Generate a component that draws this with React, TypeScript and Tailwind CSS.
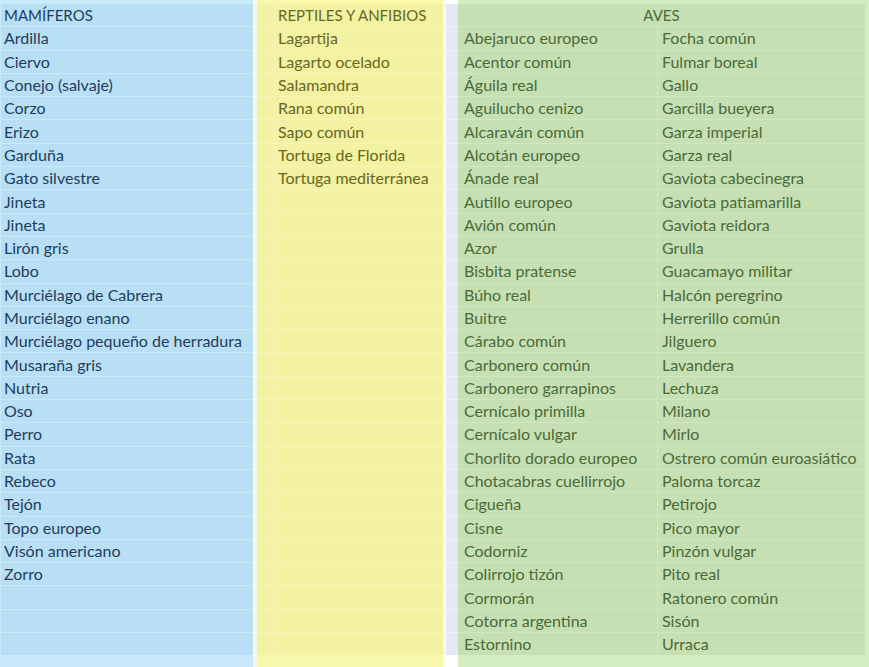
import { Fragment } from "react";

const mamiferos = [
  "Ardilla",
  "Ciervo",
  "Conejo (salvaje)",
  "Corzo",
  "Erizo",
  "Garduña",
  "Gato silvestre",
  "Jineta",
  "Jineta",
  "Lirón gris",
  "Lobo",
  "Murciélago de Cabrera",
  "Murciélago enano",
  "Murciélago pequeño de herradura",
  "Musaraña gris",
  "Nutria",
  "Oso",
  "Perro",
  "Rata",
  "Rebeco",
  "Tejón",
  "Topo europeo",
  "Visón americano",
  "Zorro",
];

const reptiles = [
  "Lagartija",
  "Lagarto ocelado",
  "Salamandra",
  "Rana común",
  "Sapo común",
  "Tortuga de Florida",
  "Tortuga mediterránea",
];

const avesA = [
  "Abejaruco europeo",
  "Acentor común",
  "Águila real",
  "Aguilucho cenizo",
  "Alcaraván común",
  "Alcotán europeo",
  "Ánade real",
  "Autillo europeo",
  "Avión común",
  "Azor",
  "Bisbita pratense",
  "Búho real",
  "Buitre",
  "Cárabo común",
  "Carbonero común",
  "Carbonero garrapinos",
  "Cernícalo primilla",
  "Cernícalo vulgar",
  "Chorlito dorado europeo",
  "Chotacabras cuellirrojo",
  "Cigueña",
  "Cisne",
  "Codorniz",
  "Colirrojo tizón",
  "Cormorán",
  "Cotorra argentina",
  "Estornino",
];

const avesB = [
  "Focha común",
  "Fulmar boreal",
  "Gallo",
  "Garcilla bueyera",
  "Garza imperial",
  "Garza real",
  "Gaviota cabecinegra",
  "Gaviota patiamarilla",
  "Gaviota reidora",
  "Grulla",
  "Guacamayo militar",
  "Halcón peregrino",
  "Herrerillo común",
  "Jilguero",
  "Lavandera",
  "Lechuza",
  "Milano",
  "Mirlo",
  "Ostrero común euroasiático",
  "Paloma torcaz",
  "Petirojo",
  "Pico mayor",
  "Pinzón vulgar",
  "Pito real",
  "Ratonero común",
  "Sisón",
  "Urraca",
];

const ROWS = 27;
const pad = (list: string[]) =>
  Array.from({ length: ROWS }, (_, i) => list[i] ?? "");

export default function App() {
  const blue = pad(mamiferos);
  const yellow = pad(reptiles);
  const greenA = pad(avesA);
  const greenB = pad(avesB);

  return (
    <div
      className="flex w-[869px] h-[667px] overflow-hidden bg-white text-[16px] leading-none"
      style={{ fontFamily: "Lato, 'Open Sans', sans-serif" }}
    >
      {/* mamiferos */}
      <div className="w-[253px] bg-[#c9eafb] pt-[4px] pl-px">
        <div className="grid grid-cols-1 gap-px bg-[#cbe9f9] text-[#1e3d5c]">
          <div className="h-[22.3px] bg-[#b9dff4] flex items-center pl-[3px] text-[15px]">MAMÍFEROS</div>
          {blue.map((m, i) => (
            <div key={i} className="h-[22.3px] bg-[#b9dff4] flex items-center pl-[3px]">
              {m}
            </div>
          ))}
        </div>
      </div>

      <div className="w-[4px] bg-[#f4f8ea]" />

      {/* reptiles */}
      <div className="w-[186px] bg-[#f8f8ac] pt-[4px]">
        <div className="grid grid-cols-[17px_1fr] gap-px bg-[#f6f6bb] text-[#67671f]">
          <div className="h-[22.3px] bg-[#f2f2a2]" />
          <div className="h-[22.3px] bg-[#f2f2a2] flex items-center pl-[3px] text-[15px]">
            REPTILES Y ANFIBIOS
          </div>
          {yellow.map((r, i) => (
            <Fragment key={i}>
              <div className="h-[22.3px] bg-[#f2f2a2]" />
              <div className="h-[22.3px] bg-[#f2f2a2] flex items-center pl-[3px]">{r}</div>
            </Fragment>
          ))}
        </div>
      </div>

      <div className="w-[3px] bg-[#f6f9ef]" />

      {/* spacer column */}
      <div className="w-[12px] bg-white pt-[4px]">
        <div className="grid grid-cols-1 gap-px bg-[#eef1f8]">
          {Array.from({ length: ROWS + 1 }, (_, i) => (
            <div key={i} className="h-[22.3px] bg-[#e5e9f3]" />
          ))}
        </div>
      </div>

      {/* aves */}
      <div className="flex-1 bg-[#d3ecc1] pt-[4px] pr-[4px]">
        <div className="grid grid-cols-[199px_1fr] gap-px bg-[#d0e7c0] text-[#4b6a38]">
          <div className="col-span-2 h-[22.3px] bg-[#c6e0b4] flex items-center justify-center text-[15px]">
            AVES
          </div>
          {greenA.map((a, i) => (
            <Fragment key={i}>
              <div className="h-[22.3px] bg-[#c6e0b4] flex items-center pl-[6px]">{a}</div>
              <div className="h-[22.3px] bg-[#c6e0b4] flex items-center pl-[4px]">{greenB[i]}</div>
            </Fragment>
          ))}
        </div>
      </div>
    </div>
  );
}
